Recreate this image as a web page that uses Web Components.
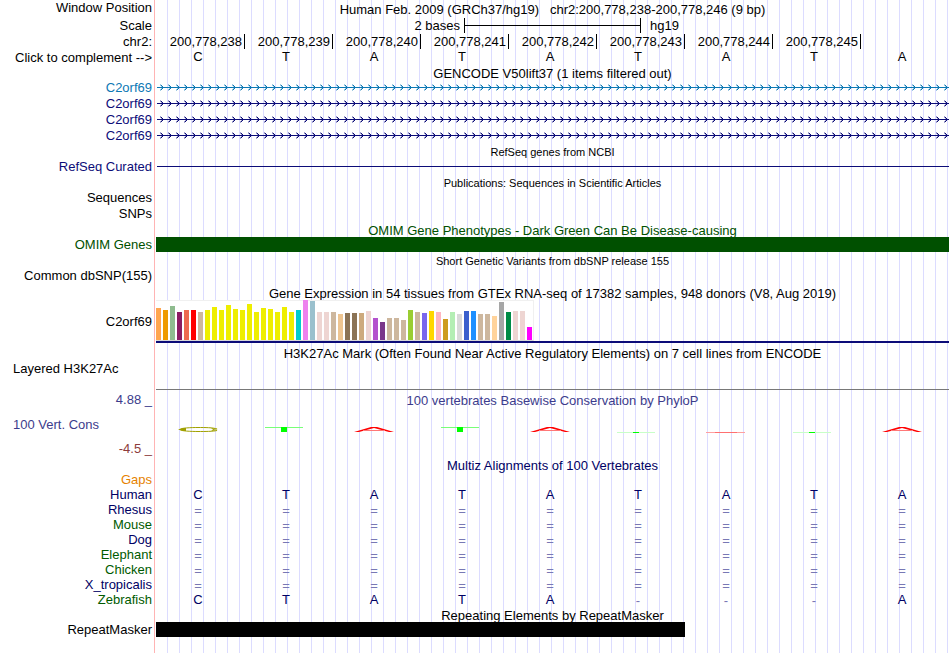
<!DOCTYPE html>
<html lang="en">
<head>
<meta charset="utf-8">
<title>Genome Browser - chr2:200,778,238-200,778,246</title>
<style>
  body { margin: 0; background: #fff; color: #000; font: 13px/15px "Liberation Sans", Arial, sans-serif; }
</style>
</head>
<body>
<genome-browser>
  <track-row label="Window Position" size="m"><track-title>Human Feb. 2009 (GRCh37/hg19) &nbsp; chr2:200,778,238-200,778,246 (9 bp)</track-title></track-row>
  <track-row label="Scale" size="l"><scale-bar from="2 bases" assembly="hg19"></scale-bar></track-row>
  <track-row label="chr2:" size="m"><position-ruler start="200778238" count="8"></position-ruler></track-row>
  <track-row label="Click to complement --&gt;"><base-row bases="CTATATATA" reference></base-row></track-row>

  <track-row><track-title>GENCODE V50lift37 (1 items filtered out)</track-title></track-row>
  <track-row label="C2orf69" size="m" style="--ink:#0c78b4"><gene-line arrows></gene-line></track-row>
  <track-row label="C2orf69" size="m" style="--ink:#0c0c78"><gene-line arrows></gene-line></track-row>
  <track-row label="C2orf69" size="m" style="--ink:#0c0c78"><gene-line arrows></gene-line></track-row>
  <track-row label="C2orf69" size="m" style="--ink:#0c0c78"><gene-line arrows></gene-line></track-row>

  <track-row><track-title small>RefSeq genes from NCBI</track-title></track-row>
  <track-row label="RefSeq Curated" size="m" style="--ink:#0c0c78"><gene-line></gene-line></track-row>

  <track-row><track-title small>Publications: Sequences in Scientific Articles</track-title></track-row>
  <track-row label="Sequences" size="m"></track-row>
  <track-row label="SNPs" size="m"></track-row>

  <track-row style="--ink:#005000"><track-title>OMIM Gene Phenotypes - Dark Green Can Be Disease-causing</track-title></track-row>
  <track-row label="OMIM Genes" style="--ink:#005000"><feature-bar></feature-bar></track-row>

  <track-row size="m"><track-title small>Short Genetic Variants from dbSNP release 155</track-title></track-row>
  <track-row label="Common dbSNP(155)" size="m"></track-row>

  <track-row size="m"><track-title>Gene Expression in 54 tissues from GTEx RNA-seq of 17382 samples, 948 donors (V8, Aug 2019)</track-title></track-row>
  <track-row label="C2orf69" size="chart"><expression-chart></expression-chart></track-row>

  <track-row size="l"><track-title>H3K27Ac Mark (Often Found Near Active Regulatory Elements) on 7 cell lines from ENCODE</track-title></track-row>
  <track-row label="Layered H3K27Ac" size="signal" start><signal-floor></signal-floor></track-row>

  <track-row label="4.88 _" size="l" style="--ink:#3c3c8c"><track-title>100 vertebrates Basewise Conservation by PhyloP</track-title></track-row>
  <track-row label="100 Vert. Cons" size="logo" start style="--ink:#3c3c8c"><conservation-logo></conservation-logo></track-row>
  <track-row label="-4.5 _" size="m" style="--ink:#8c3c3c"></track-row>

  <track-row style="--ink:#000064"><track-title>Multiz Alignments of 100 Vertebrates</track-title></track-row>
  <track-row label="Gaps" style="--ink:#e68200"></track-row>
  <track-row label="Human" style="--ink:#000064"><base-row bases="CTATATATA"></base-row></track-row>
  <track-row label="Rhesus" style="--ink:#000064"><base-row bases="========="></base-row></track-row>
  <track-row label="Mouse" style="--ink:#005a00"><base-row bases="========="></base-row></track-row>
  <track-row label="Dog" style="--ink:#000064"><base-row bases="========="></base-row></track-row>
  <track-row label="Elephant" style="--ink:#005a00"><base-row bases="========="></base-row></track-row>
  <track-row label="Chicken" style="--ink:#005a00"><base-row bases="========="></base-row></track-row>
  <track-row label="X_tropicalis" style="--ink:#000064"><base-row bases="========="></base-row></track-row>
  <track-row label="Zebrafish" style="--ink:#005a00"><base-row bases="CTATA---A"></base-row></track-row>

  <track-row><track-title>Repeating Elements by RepeatMasker</track-title></track-row>
  <track-row label="RepeatMasker"><feature-bar partial></feature-bar></track-row>
</genome-browser>

<script>
const define = (name, css, render) => customElements.define(name, class extends HTMLElement {
  connectedCallback() {
    if (this.shadowRoot) return;
    this.attachShadow({ mode: 'open' }).innerHTML = `<style>${css}</style>${render(this)}`;
  }
});

define('genome-browser', `
  :host { display: flex; flex-direction: column; min-height: 100vh; box-sizing: border-box;
    --label-width: 154px;
    background:
      linear-gradient(#ffb4b4, #ffb4b4) 154px 0 / 1px 100% no-repeat,
      repeating-linear-gradient(90deg, transparent 0 11px, #dcdcff 11px 12px) 156px 0 no-repeat; }
`, () => '<slot></slot>');

define('track-row', `
  :host { display: grid; grid-template-columns: var(--label-width) minmax(0, 1fr); column-gap: 2px;
    padding-right: 1px; min-height: 15px; color: var(--ink, #000); }
  :host([size=m]) { min-height: 16px; }
  :host([size=l]) { min-height: 18px; }
  :host([size=chart]) { min-height: 43px; }
  :host([size=signal]) { min-height: 29px; }
  :host([size=logo]) { min-height: 33px; }
  .label { box-sizing: border-box; padding-right: 2px; text-align: right; align-self: center; white-space: nowrap; }
  :host([size=m]) .label, :host([size=signal]) .label { align-self: start; }
  :host([start]) .label { text-align: left; padding-left: 13px; }
  .data { display: grid; }
`, el => `<span class="label">${(el.getAttribute('label') || '').replace('>', '&gt;')}</span><div class="data"><slot></slot></div>`);

define('track-title', `
  :host { display: block; text-align: center; align-self: center; padding-top: 1px; margin-bottom: -1px; }
  :host([small]) { font-size: 11px; }
`, () => '<slot></slot>');

define('scale-bar', `
  :host { display: grid; grid-template-columns: 7fr 4fr 7fr; align-items: center; padding-left: 1px; }
  .from { text-align: right; padding-right: 5px; }
  .assembly { padding-left: 9px; }
  .bar { display: grid; align-items: center; height: 15px; margin-left: -1px; border: solid #000; border-width: 0 1px; }
  .bar i { height: 1px; background: #000; }
`, el => `<span class="from">${el.getAttribute('from')}</span><span class="bar"><i></i></span><span class="assembly">${el.getAttribute('assembly')}</span>`);

define('position-ruler', `
  :host { display: grid; grid-template-columns: repeat(9, minmax(0, 1fr)); margin-left: 1px; }
  span { text-align: right; padding-right: 2px; border-right: 1px solid #000; height: 15px; line-height: 16px; }
`, el => Array.from({ length: +el.getAttribute('count') },
  (_, i) => `<span>${(+el.getAttribute('start') + i).toLocaleString('en-US')}</span>`).join(''));

define('base-row', `
  :host { display: grid; grid-template-columns: repeat(9, minmax(0, 1fr)); margin-left: 1px; color: #000064; }
  :host([reference]) { color: #000; line-height: 14px; }
  span { text-align: center; padding-right: 6px; }
  .pale { color: #7878b4; line-height: 17px; margin-bottom: -2px; }
`, el => [...el.getAttribute('bases')].map(b =>
    `<span${/[=-]/.test(b) ? ' class="pale"' : ''}>${b}</span>`).join(''));

define('gene-line', `
  :host { display: block; margin-left: 1px; height: 16px; }
  svg { display: block; width: 100%; height: 16px; }
`, el => `<svg aria-hidden="true" shape-rendering="crispEdges" fill="var(--ink)">
  <defs><pattern id="chevrons" width="8" height="16" patternUnits="userSpaceOnUse">
    <path d="M4 5h1v1H4zM5 6h1v3H5zM4 9h1v1H4z"/>
    <path d="M3 4h1v1H3zM3 10h1v1H3zM4 6h1v1H4zM4 8h1v1H4zM3 5h1v1H3zM3 9h1v1H3z" opacity=".4"/>
  </pattern></defs>
  <rect y="7" width="100%" height="1"/>
  ${el.hasAttribute('arrows') ? '<rect width="100%" height="16" fill="url(#chevrons)"/>' : ''}</svg>`);

define('feature-bar', `
  :host { display: grid; grid-template-columns: 2fr 1fr; height: 15px; }
  i { background: var(--ink, #000); grid-column: 1 / 3; }
  :host([partial]) i { grid-column: 1; }
`, () => '<i></i>');

const TISSUES = [
  [32,'ffa54f'],[30,'ee9a00'],[34,'8fbc8f'],[28,'8b1c62'],[30,'ee6a50'],[30,'ff0000'],[28,'cdb79e'],
  [30,'eeee00'],[33,'eeee00'],[30,'eeee00'],[35,'eeee00'],[31,'eeee00'],[30,'eeee00'],[36,'eeee00'],
  [28,'eeee00'],[32,'eeee00'],[31,'eeee00'],[28,'eeee00'],[33,'eeee00'],[28,'eeee00'],[30,'00cdcd'],
  [40,'ee82ee'],[39,'9ac0cd'],[28,'eed5d2'],[28,'eed5d2'],[28,'cdb79e'],[26,'eec591'],[27,'8b7355'],
  [27,'8b7355'],[27,'cdaa7d'],[29,'eed5d2'],[22,'b452cd'],[18,'7a378b'],[22,'cdb79e'],[22,'cdb79e'],
  [20,'cdb79e'],[30,'9acd32'],[28,'cdb79e'],[27,'7a67ee'],[29,'ffd700'],[28,'ffb6c1'],[21,'cd9b1d'],
  [28,'b4eeb4'],[26,'d9d9d9'],[29,'3a5fcd'],[29,'1e90ff'],[26,'cdb79e'],[26,'cdb79e'],[24,'ffd39b'],
  [38,'a6a6a6'],[28,'008b45'],[29,'eed5d2'],[29,'eed5d2'],[13,'ff00ff']
];
define('expression-chart', `
  :host { display: block; border-bottom: 2px solid #0c0c78; }
  .plot { display: flex; align-items: flex-end; gap: 2px; width: max-content; height: 41px; padding-right: 1px;
    box-sizing: border-box; background: #fff; border: solid #f0f0f0; border-width: 1px 1px 0 0; border-bottom: 1px solid #d8d8d8; }
  i { width: 5px; flex: none; }
`, () => `<div class="plot">${TISSUES.map(([h, c]) => `<i style="height:${h}px;background:#${c}"></i>`).join('')}</div>`);

define('signal-floor', `
  :host { display: block; border-bottom: 1px solid #787878; }
`, () => '');

const LOGOS = {
  C: '<path d="M39 2C35 .5 27 .5 20 .5S2 1 2 2.500 13 4.500 20 4.500s15 0 19-1" fill="none" stroke="#a0a000"/><path d="M0 2.500 5 1h3v3H5zM33 1l7 1-5 .500zM33 4l7-1-5-.500z" fill="#a0a000"/>',
  T: '<path d="M-1 .5h38" stroke="#78ff78"/><path d="M15 0h6v5h-6z" fill="#0f0"/>',
  A: '<path d="M0 5 17 0h6l17 5h-5L20 1 5 5z" fill="#f00"/><path d="M9 3.500h22" stroke="#ff7878"/>',
  t: '<path d="M-1 5.500h38" stroke="#c8ffc8"/><path d="M15 5h6v1h-6z" fill="#0f0"/>',
  a: '<path d="M0 5.500h39" stroke="#ffa0a0"/><path d="M9 5.500h22" stroke="#ff7070"/>'
};
define('conservation-logo', `
  :host { display: grid; grid-template-columns: repeat(9, minmax(0, 1fr)); margin-left: 1px; padding-top: 19px; }
  span { display: grid; justify-content: center; padding-right: 4px; }
  svg { width: 42px; height: 6px; overflow: visible; }
`, () => [...'CTATAtatA'].map(k => `<span><svg viewBox="0 0 42 6" role="img" aria-label="${k.toUpperCase()}">${LOGOS[k]}</svg></span>`).join(''));
</script>
</body>
</html>
